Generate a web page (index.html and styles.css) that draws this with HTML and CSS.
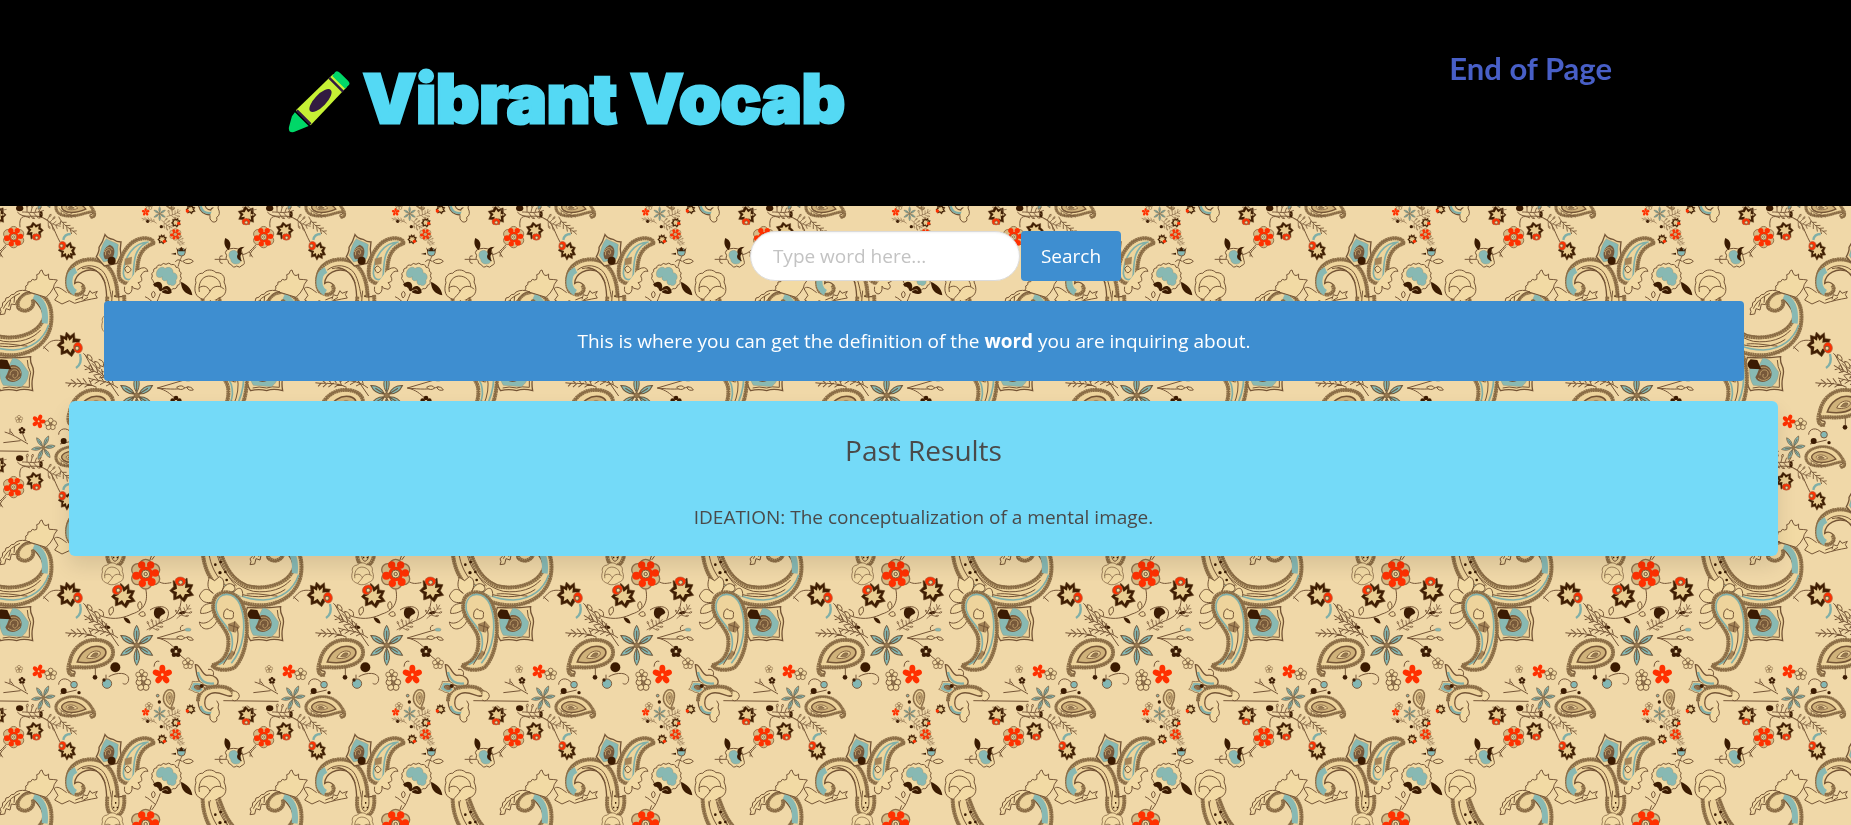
FILE: index.html
```html
<!DOCTYPE html>
<html lang="en">
<head>
<meta charset="utf-8">
<title>Vibrant Vocab</title>
<link rel="stylesheet" href="styles.css">
</head>
<body>
<svg class="wallpaper" aria-hidden="true">
  <defs>
    <g id="rose">
      <g class="halo"><circle cx="0" cy="-26" r="18"/><circle cx="24" cy="-13" r="18"/><circle cx="24" cy="14" r="18"/><circle cx="0" cy="27" r="18"/><circle cx="-24" cy="14" r="18"/><circle cx="-24" cy="-13" r="18"/></g>
      <g class="red"><circle cx="-12" cy="-27" r="11"/><circle cx="15" cy="-27" r="11"/><circle cx="29" cy="-3" r="11"/><circle cx="18" cy="24" r="12"/><circle cx="-10" cy="28" r="11"/><circle cx="-28" cy="5" r="12"/><circle r="22"/></g>
      <circle class="core" r="12"/><circle class="line" r="5"/>
    </g>
    <g id="bloom">
      <path class="husk" d="M-6 -38 L6 -26 L18 -36 L20 -18 L36 -16 L28 2 L38 16 L20 20 L10 36 L-4 24 L-22 30 L-22 12 L-34 2 L-22 -10 L-24 -28 L-10 -24Z"/>
      <path class="petal" d="M-2 -24 L3 -12 L14 -22 L12 -6 L26 -8 L16 4 L26 12 L12 12 L6 24 L-2 12 L-14 20 L-12 6 L-24 2 L-12 -4 L-14 -18 L-4 -12Z"/>
    </g>
    <g id="bud"><ellipse class="redline" rx="16" ry="13"/><circle class="core" cx="1" cy="3" r="6"/></g>
    <g id="daisy">
      <g id="petals3"><path class="blue" d="M0 -8 C-14 -30 -8 -48 0 -60 C8 -48 12 -30 0 -8Z M0 -12 V-44"/><path class="blue" transform="rotate(58)" d="M0 -8 C-12 -26 -8 -44 0 -56 C8 -44 12 -26 0 -8Z M0 -12 V-40"/><path class="blue" transform="rotate(-58)" d="M0 -8 C-12 -26 -8 -44 0 -56 C8 -44 12 -26 0 -8Z M0 -12 V-40"/></g>
      <use href="#petals3" transform="rotate(180)"/><circle class="husk2" r="8"/>
    </g>
    <g id="star" class="red"><ellipse cx="0" cy="-18" rx="9" ry="12"/><ellipse cx="0" cy="-18" rx="9" ry="12" transform="rotate(72)"/><ellipse cx="0" cy="-18" rx="9" ry="12" transform="rotate(144)"/><ellipse cx="0" cy="-18" rx="9" ry="12" transform="rotate(216)"/><ellipse cx="0" cy="-18" rx="9" ry="12" transform="rotate(288)"/><circle r="13"/><circle class="starcore" r="4"/></g>
    <g id="teardrop">
      <path class="band" d="M-68 55 C-60 68 -42 62 -48 50 C-64 50 -66 36 -62 20 C-55 -20 -20 -48 22 -44 C52 -42 72 -24 66 2 C58 32 10 40 -30 38 C-56 38 -70 44 -68 55Z"/>
      <path class="rope" d="M-48 60 C-66 66 -72 44 -62 20 C-55 -20 -20 -48 22 -44 C52 -42 72 -24 66 2 C58 32 10 40 -30 38 L-62 38"/>
      <path class="tanband" d="M-40 22 C-30 -10 0 -30 28 -24 C50 -18 50 -2 36 10 C16 26 -14 26 -40 22Z"/>
      <path class="core" d="M-12 10 C-4 -8 14 -16 28 -8 C34 4 10 16 -12 10Z"/>
      <path class="husk2" d="M0 6 C6 -4 14 -8 22 -4 C24 4 12 8 0 6Z"/>
    </g>
    <g id="posy"><g class="line cream"><circle cx="0" cy="-13" r="9"/><circle cx="13" cy="-3" r="9"/><circle cx="8" cy="12" r="9"/><circle cx="-8" cy="12" r="9"/><circle cx="-13" cy="-3" r="9"/></g><circle class="husk2" r="4"/></g>
    <g id="darkposy"><circle cx="0" cy="-10" r="7"/><circle cx="10" cy="-2" r="7"/><circle cx="6" cy="10" r="7"/><circle cx="-6" cy="10" r="7"/><circle cx="-10" cy="-2" r="7"/></g>
    <g id="sprig"><path class="line" d="M0 0 C25 -10 45 -8 75 -34 M18 -6 L12 -22 M32 -9 L30 -28 M46 -14 L46 -34 M58 -21 L62 -42 M24 -7 L38 4 M42 -12 L58 -3 M58 -21 L74 -16"/><path class="line cream" d="M12 -22 q-9 -7 -3 -14 q9 4 3 14 M30 -28 q-8 -7 -2 -14 q8 5 2 14 M38 4 q9 -4 15 3 q-8 6 -15 -3 M58 -3 q8 -5 14 1 q-7 6 -14 -1"/></g>
    <g id="fern"><path class="line" d="M0 0 C-30 -24 -60 -20 -90 -30 M-14 -10 l-4 -16 M-28 -18 l-8 -16 M-44 -22 l-10 -14 M-60 -24 l-12 -13 M-20 -14 l-16 8 M-36 -20 l-18 10 M-54 -23 l-16 10 M-72 -26 l-12 8"/></g>
    <g id="shell"><path class="line cream" d="M-20 46 C-44 40 -50 20 -42 -4 C-48 -20 -34 -34 -22 -32 C-12 -46 10 -44 18 -34 C34 -36 48 -22 42 -6 C52 14 50 36 26 42 C16 52 -8 56 -20 46Z M-32 24 C-36 0 -26 -22 -4 -24 C18 -24 32 -10 32 8 M-34 12 C-20 2 -6 6 0 22 C10 2 34 4 42 16 M0 22 C-4 30 -14 38 -20 46"/></g>
    <g id="calyx">
      <path class="line cream" d="M-40 10 Q-48 4 -42 -4 Q-48 -12 -38 -17 Q-40 -28 -29 -28 Q-28 -40 -16 -36 Q-10 -46 -1 -39 Q8 -47 15 -38 Q27 -41 29 -30 Q41 -30 39 -19 Q49 -14 42 -5 Q49 4 41 10 Q44 22 33 24 Q32 36 20 34 Q10 44 0 36 Q-30 40 -40 10Z"/>
      <path class="teal" d="M-30 -10 C-30 -28 -10 -36 -4 -26 C8 -36 22 -26 20 -14 C34 -14 36 4 28 8 C34 18 20 30 12 22 C6 26 0 16 2 8 C-8 16 -16 4 -12 -2 C-22 4 -30 0 -30 -10Z"/>
      <path class="dark" d="M-40 22 C-26 4 -6 16 -14 36 C-4 20 14 24 16 46 C6 54 -8 48 -14 44 C-10 36 0 36 6 42 C2 30 -8 36 -16 42 C-26 40 -20 28 -30 28 C-36 30 -36 24 -40 22Z M44 14 C60 20 76 32 78 54 C58 50 44 38 44 14Z"/>
      <path class="line" d="M-18 48 C-26 70 -32 84 -44 98 M-32 82 C-46 70 -54 62 -64 58 M-40 62 q-10 -14 2 -20 q10 10 -2 20"/>
    </g>
    <g id="medallion">
      <path class="band" d="M-10 -52 Q-2 -40 14 -38 Q24 -30 38 -30 Q34 -10 38 10 L26 34 L-12 42 L-36 14 Q-26 -4 -28 -14 Q-16 -30 -10 -52Z"/>
      <path class="teal" d="M-6 -40 C10 -30 24 -28 30 -22 C26 -8 32 4 24 20 L-14 30 L-28 10 C-20 -4 -22 -20 -6 -40Z"/>
      <path class="brownfill" d="M4 -22 C20 -16 22 0 12 20 L-10 22 C-20 4 -12 -14 4 -22Z"/>
      <path class="tanline" d="M-8 10 C-12 -4 0 -12 6 -4 C10 6 2 10 0 2 M-12 0 C-10 -14 8 -18 12 -6"/>
      <circle class="dark" cx="10" cy="26" r="12"/>
    </g>
    <g id="scroll">
      <path class="band" d="M203 712 C192 680 204 648 232 636 C270 620 316 634 334 660 C348 684 350 712 352 740 L372 740 C376 776 368 798 345 798 C325 796 318 780 320 740 C318 690 305 668 285 662 C262 655 226 668 224 700 C238 690 258 704 252 722 C246 738 214 736 203 712Z"/>
      <path class="rope" d="M246 706 C262 720 238 742 218 732 C198 724 194 680 215 652 C236 626 285 620 312 640 C342 662 352 700 353 744 M322 740 C318 780 328 798 345 798 C368 796 376 770 372 734"/>
      <path class="tealband" d="M226 728 C210 718 204 700 211 676 C214 668 220 664 228 660"/>
      <path class="line" d="M232 660 C258 640 292 644 312 668 C326 690 330 720 334 742 M246 656 C274 648 304 664 316 700 M262 652 C290 656 300 670 310 690 M338 722 C334 760 332 780 345 784 C360 780 358 750 354 726"/>
      <path class="dark" d="M343 736h4v5h-4z M345 756h4v5h-4z M339 770h4v5h-4z M350 770h4v5h-4z"/>
      <use href="#medallion" x="325" y="606"/>
      <path class="band" d="M460 580 C464 566 430 558 405 572 C370 592 352 640 357 680 C362 704 404 710 410 680 C414 640 410 600 460 580Z"/>
      <path class="rope" d="M460 580 C464 566 430 558 405 572 C370 592 352 640 357 680 C362 704 404 710 410 680 C414 640 410 600 460 580Z"/>
      <path class="tealline" d="M446 576 C400 578 372 620 370 670 C374 696 398 694 400 672 C402 630 404 594 440 578"/>
      <path class="line cream" d="M374 656 q8 -14 14 -4 q10 6 0 14 q-8 8 -14 -10"/>
      <path class="tan" d="M374 626 l22 -6 l-2 22 l-20 4z"/>
      <path class="line cream" d="M412 660 q26 -16 32 4 q-14 -4 -22 14 q10 18 -8 20 q14 14 0 20 q-18 -2 -18 -10 q2 22 -12 24 q-14 -4 -10 -22"/>
      <path class="line cream" d="M200 728 C184 716 172 706 162 716 L174 736 L164 750 L186 762 L208 752 L224 760 C250 752 268 748 292 744 L286 734 L292 724 L276 730 L270 722 L262 738 L250 734 L246 748 M226 750 l20 -8 M248 752 l16 -10"/>
    </g>
    <g id="motif">
      <path class="line cream" d="M74 722 Q80 714 77 708 Q86 706 84 696 Q94 698 97 688 Q104 692 110 688 Q112 680 110 674 Q119 674 121 662 L126 660 Q128 670 134 676 Q142 678 146 672 Q144 682 148 688 Q160 688 172 690 Q160 704 160 714 Q152 730 138 742Z"/>
      <path class="line cream" d="M0 794 Q6 784 0 776 Q10 772 8 758 Q18 756 18 744 Q28 744 34 734 Q44 736 48 726 Q66 716 90 726 C70 724 54 742 46 764 L34 762 L30 780 L18 776 L14 792Z M10 776 C20 756 34 742 60 730 M26 770 l6 -20 M42 758 l2 -20"/>
      <path class="band" d="M52 25 C50 -5 75 -28 100 -25 C145 -15 157 20 155 60 C150 130 90 168 30 168 C-50 165 -138 110 -142 0 C-142 -22 -120 -32 -98 -20 C-82 20 -70 78 -10 104 C50 122 110 100 126 60 C134 36 120 20 100 -4 C108 20 82 42 60 30Z"/>
      <path class="rope" d="M98 -2 C108 24 76 42 58 26 C42 6 66 -24 98 -24 C145 -15 157 20 154 62 C150 130 90 166 30 166 C-50 163 -138 110 -142 0 C-142 -22 -120 -32 -98 -16 C-82 20 -70 82 -10 108 C50 122 112 100 128 62"/>
      <path class="tealband" d="M102 -12 C130 2 138 34 134 70"/>
      <path class="tealline" d="M146 74 C130 122 90 146 40 150 C-10 150 -56 130 -76 104 M-132 -8 C-130 -24 -110 -24 -100 -8"/>
      <path class="line" d="M-124 4 C-118 60 -86 110 -30 132 C20 146 72 142 106 118 M-100 6 C-90 60 -50 108 10 124 C60 130 100 116 122 90 M-10 132 C20 128 60 138 82 138 M-122 20 C-124 -8 -104 -12 -96 12 C-80 50 -68 84 -40 108"/>
      <g class="dark"><circle cx="-88" cy="36" r="4"/><circle cx="-104" cy="44" r="4"/><circle cx="-90" cy="68" r="5"/><circle cx="-74" cy="66" r="4"/><circle cx="-70" cy="90" r="4"/><circle cx="-50" cy="108" r="4"/></g>
      <path class="band" d="M-8 172 Q40 176 92 170 Q90 186 96 196 Q104 210 98 232 Q94 250 98 272 Q70 264 50 272 Q26 266 2 272 C-14 250 -20 210 -8 172Z"/>
      <path class="line" d="M82 180 Q82 200 92 218 Q86 240 88 262 Q64 258 50 264 Q26 258 8 264"/>
      <path class="teal" d="M38 174 C64 176 70 196 86 216 C84 240 78 250 64 260 L10 256 C-4 236 -4 196 4 186 C20 210 24 206 38 174Z"/>
      <path class="brownfill" d="M32 196 C56 190 72 214 62 234 C48 250 22 250 16 232 C24 220 26 206 32 196Z"/>
      <path class="tanline" d="M30 226 C30 204 56 206 54 222 C50 240 34 236 40 222 M24 234 C36 246 52 242 60 230 M30 204 C46 196 62 208 62 220"/>
      <path class="dark" d="M2 178 L22 180 L34 208 L0 206 C-12 196 -8 186 2 178Z"/>

      <path class="line cream" d="M640 130 C620 120 622 100 628 82 L644 92 L658 80 C676 86 674 110 664 126 M640 130 C618 108 606 120 598 138 C606 158 620 160 640 156 M636 160 C610 160 600 176 602 190 C618 192 634 184 642 176 M648 184 C640 214 612 226 598 216 C602 244 636 244 650 214 M664 126 C676 100 690 96 700 106 C710 116 704 126 690 126 M700 128 C714 108 730 110 728 140"/>
      <path class="band" d="M640 160 C642 120 700 112 726 160 C752 220 742 310 706 350 C690 364 646 362 636 346 C672 338 690 304 684 262 C676 226 634 204 640 160Z"/>
      <path class="rope" d="M640 160 C642 120 700 112 726 160 C752 220 742 310 706 350 C690 364 646 362 636 346 C672 338 690 304 684 262 C676 226 634 204 640 160Z"/>
      <path class="tealline" d="M656 344 C690 330 704 290 694 254 C682 222 644 202 648 164 C654 126 700 120 720 164 C744 226 728 300 694 340"/>
      <path class="line cream" d="M672 186 q8 -16 16 -4 q16 0 12 12 q2 16 -14 12 q-20 4 -14 -20"/>
      <path class="tan" d="M684 222 l22 -8 l14 16 l-14 18 l-20 -6z M694 300 l12 8 l-12 20 l-12 2z"/>
      <path class="line" d="M686 224 l30 10 M704 214 l-4 32 M712 232 q8 40 -12 84 M690 310 l-20 34"/>

      <g class="line"><path d="M436 112 C446 150 436 180 396 192 C350 214 310 206 276 184 L250 160 M130 146 C148 122 160 118 184 122 M130 140 l16 14 M448 240 C490 200 540 220 544 145 M472 92 C490 104 498 100 514 98 M455 16 L446 40 M472 264 L560 238 M472 264 C510 268 540 270 566 260 M472 264 C500 270 510 282 522 292 M536 312 L560 332 M326 380 C350 366 384 366 386 386 C386 400 376 406 368 400 M286 350 l0 26 M318 374 v16 M256 166 l24 44 M276 190 l40 42 M320 236 l36 52 M500 208 C520 170 480 160 450 180"/></g>
      <use href="#rose" x="437" y="72"/>
      <use href="#bloom" x="205" y="134"/><use href="#bud" transform="translate(234 143) rotate(80)"/>
      <use href="#bloom" x="368" y="138"/><use href="#bud" transform="translate(352 119) rotate(-40)"/>
      <use href="#bloom" x="543" y="120"/><use href="#bud" x="541" y="94"/>
      <path class="tealline2" d="M240 162 C246 184 240 196 228 204"/>
      <path class="line cream" d="M262 164 q16 2 14 18 q-16 -4 -14 -18 M284 184 q18 2 16 22 q-16 -6 -16 -22 M296 178 q18 4 14 20 M330 196 q-10 -20 8 -26 q8 16 -8 26 M416 192 q18 -16 20 4 q-12 8 -20 -4 M420 180 q-14 -16 0 -26 q12 12 0 26 M268 196 q-4 14 10 20 M306 214 q12 2 10 14"/>
      <path class="dark" d="M312 230 q14 -8 20 4 q-12 8 -20 -4 M370 202 q18 0 22 18 q-16 2 -22 -18 M464 178 C470 166 494 172 496 188 C490 196 482 192 478 206 C464 208 458 192 464 178Z M534 190 q14 -12 26 -4 q-10 12 -26 4"/>
      <use href="#sprig" transform="translate(530 206) rotate(-22) scale(.7)"/>
      <use href="#sprig" transform="translate(440 240) rotate(-10) scale(.7)"/>
      <use href="#fern" x="354" y="264"/><use href="#fern" transform="translate(290 262) rotate(-10)"/><use href="#fern" transform="translate(330 250) rotate(16)"/>
      <use href="#daisy" x="410" y="286"/>
      <use href="#teardrop" x="272" y="314"/>
      <path class="line cream" d="M530 262 q16 -10 24 2 q-12 10 -24 -2 M560 262 q14 -4 20 8 q-14 4 -20 -8 M542 240 q-4 -12 8 -14"/>
      <ellipse class="teal" cx="564" cy="239" rx="9" ry="5"/>
      <use class="dark" href="#darkposy" x="528" y="304"/><use href="#posy" transform="translate(564 340) scale(.75)"/>
      <use href="#star" x="487" y="374"/><use href="#posy" x="430" y="400"/><use href="#posy" transform="translate(425 376) scale(.8)"/>
      <path class="line" d="M462 350 q2 -20 16 -16"/>
      <circle class="dark" cx="346" cy="352" r="15"/><circle class="dark" cx="285" cy="382" r="7"/><circle class="tealdot" cx="321" cy="401" r="14"/><circle class="dark" cx="312" cy="390" r="5"/>

      <use href="#daisy" transform="translate(130 443) rotate(24) scale(.64)"/>
      <use href="#star" transform="translate(116 364) rotate(20) scale(.7)"/>
      <use href="#posy" transform="translate(152 372) scale(.8)"/><use href="#posy" transform="translate(57 357) scale(.5)"/>
      <use class="dark" href="#darkposy" transform="translate(66 391) scale(.6)"/>
      <use href="#teardrop" transform="translate(222 470) scale(-.8 .72) rotate(16)"/>
      <path class="line" d="M14 396 C40 404 50 412 84 432 M30 400 v-14 M40 404 l-8 -10 M66 398 L78 424 M10 428 L62 422 M-80 452 L86 454 M176 404 C176 386 200 378 216 400 M180 432 L230 420 M52 486 C70 510 110 490 130 504 C160 516 160 540 180 576 M60 532 C56 500 70 494 90 504 M0 620 C0 604 10 600 18 590"/>
      <circle class="dark" cx="191" cy="423" r="9"/><circle class="dark" cx="237" cy="428" r="5"/><circle class="tealdot" cx="222" cy="404" r="10"/>
      <ellipse class="dark" cx="59" cy="475" rx="11" ry="9"/><ellipse class="dark" cx="123" cy="493" rx="5" ry="10"/>
      <use href="#fern" transform="translate(176 474) rotate(190) scale(.62)"/><use href="#fern" transform="translate(176 500) rotate(206) scale(.8)"/>
      <use href="#sprig" transform="translate(66 486) rotate(20) scale(.8)"/><use href="#sprig" transform="translate(130 504) rotate(50) scale(.7)"/>
      <use href="#sprig" transform="translate(20 478) rotate(190) scale(.6)"/>
      <use href="#rose" transform="translate(41 561) scale(.72)"/>
      <use href="#bloom" transform="translate(106 542) rotate(180) scale(.72)"/><use href="#bud" transform="translate(109 561) scale(.75)"/>
      <use href="#bloom" transform="translate(204 602) rotate(160) scale(.72)"/><use href="#bud" transform="translate(187 587) rotate(100) scale(.8)"/>
      <path class="tealline2" d="M190 570 C192 556 200 552 212 552"/>
      <use href="#bloom" transform="translate(743 496) rotate(180) scale(.75)"/><use href="#bud" transform="translate(738 515) scale(.75)"/>

      <use href="#scroll"/>
      <use href="#shell" x="630" y="702"/>
      <use href="#shell" transform="translate(337 68) scale(.7)"/>
      <use href="#calyx" x="499" y="682"/>
      <path class="line cream" d="M534 650 C540 630 540 630 546 618 M546 634 q-14 -10 -20 2 M548 634 q20 -14 32 0 q-16 14 -32 0"/>
      <circle class="tealdot" cx="544" cy="606" r="12"/><path class="dark" d="M528 592 L536 602 L544 590 L552 602 L560 592 L556 604 H532Z M512 612 l16 -4 v6z"/>
      <g>
        <path class="line cream" d="M680 600 Q672 608 680 616 Q674 626 684 632 Q684 642 694 644 Q700 656 710 648 Q720 656 726 646 Q736 644 732 632 L724 600 Q700 590 680 600Z"/>
        <path class="teal" d="M692 604 C704 596 716 606 714 616 C724 618 726 632 718 640 C706 646 692 640 692 628 C684 620 686 608 692 604Z"/>
        <path class="dark" d="M734 590 C716 590 708 600 714 612 C706 622 716 632 726 634 C718 620 722 612 728 612 C718 602 726 596 734 590Z M676 564 C692 570 696 586 686 600 C674 592 670 578 676 564Z"/>
        <path class="line" d="M726 614 C744 612 754 600 768 584 M680 628 L644 628 M660 628 q-4 -12 8 -10 M660 628 q-4 12 8 12 M748 606 l10 16"/>
      </g>

      <use href="#daisy" transform="translate(479 491) scale(.36)"/>
      <use href="#teardrop" transform="translate(507 446) rotate(-70) scale(.4)"/>
      <use href="#star" transform="translate(437 486) scale(.4)"/><use href="#rose" transform="translate(526 553) scale(.4)"/>
      <use href="#bloom" transform="translate(527 518) scale(.4)"/><use href="#bloom" transform="translate(486 568) scale(.4)"/><use href="#bloom" transform="translate(571 478) scale(.4)"/>
      <g class="red"><circle cx="536" cy="520" r="5"/><circle cx="493" cy="574" r="5"/><circle cx="562" cy="483" r="5"/></g>
      <circle class="dark" cx="478" cy="456" r="5"/><circle class="dark" cx="443" cy="514" r="5"/><circle class="dark" cx="484" cy="530" r="5"/><circle class="tealdot" cx="473" cy="437" r="4"/>
      <use href="#sprig" transform="translate(500 500) scale(.55)"/><use href="#sprig" transform="translate(484 510) rotate(60) scale(.5)"/><use href="#fern" transform="translate(470 520) scale(.5)"/><use href="#sprig" transform="translate(530 560) rotate(70) scale(.4)"/>
      <use href="#posy" transform="translate(447 468) scale(.5)"/>

      <path class="band" d="M586 344 C600 340 604 374 620 376 C644 372 660 390 652 404 C640 414 604 410 596 390 C588 372 588 360 586 344Z"/>
      <path class="tealline2" d="M594 366 C600 394 620 404 642 400"/>
      <path class="band" d="M594 454 C594 420 620 410 650 410 C680 408 700 420 700 434 C690 450 662 420 634 430 C606 440 610 480 632 480 C636 470 646 472 648 486 C636 500 596 500 594 454Z"/>
      <path class="rope" d="M594 454 C594 420 620 410 650 410 C680 408 700 420 700 434"/>
      <path class="tealline2" d="M602 468 C606 486 620 492 638 488"/>
      <use href="#medallion" transform="translate(592 413) rotate(-90) scale(.5)"/>
      <path class="line cream" d="M698 422 q20 2 20 18 q-8 18 -22 10 M650 452 q10 10 4 22 q10 20 -4 28 q4 16 -12 14 q-12 -8 -8 -20 M640 376 q4 -20 -16 -18"/>
    </g>
    <pattern id="paisley" x="0" y="50" width="250" height="250" patternUnits="userSpaceOnUse" viewBox="0 0 750 750">
      <use href="#motif" x="0" y="-750"/><use href="#motif" x="-750" y="0"/><use href="#motif" x="750" y="0"/><use href="#motif" x="750" y="-750"/><use href="#motif" x="750" y="750"/><use href="#motif" x="0" y="750"/><use href="#motif"/>
    </pattern>
  </defs>
  <rect width="100%" height="100%" fill="url(#paisley)"/>
</svg>

<header class="hero">
  <div class="brand">
    <svg class="crayon" viewBox="18 21 63 63" aria-hidden="true">
      <path fill="#c6f135" d="M26 61 L64 24 L78 37 L41 76Z"/>
      <path fill="#00d768" d="M63 26 L66 22 Q68 20 71 23 L79 31 Q82 34 79 36 L76 39Z M25 63 L39 77 L24 83 Q18 84 19 78 L22 67Z"/>
      <path stroke="#321b41" stroke-width="2.5" d="M60 28 L74 42 M27 61 L41 75"/>
      <ellipse cx="51" cy="51" rx="15" ry="6" fill="#321b41" transform="rotate(-46 51 51)"/>
    </svg>
    <h1 class="title">Vibrant Vocab</h1>
  </div>
  <a class="page-link" href="#end">End of Page</a>
</header>

<main class="content">
  <form class="search">
    <input class="search-input" type="text" placeholder="Type word here..." aria-label="Word">
    <button class="search-button" type="button">Search</button>
  </form>
  <p class="message">This is where you can get the definition of the <strong>word</strong> you are inquiring about.</p>
  <section class="results" id="end">
    <h2 class="results-title">Past Results</h2>
    <p class="result">IDEATION: The conceptualization of a mental image.</p>
  </section>
</main>
</body>
</html>
```
FILE: styles.css
```css
* { box-sizing: border-box; }
html, body { margin: 0; min-height: 100%; }
body {
  background: #f0d8a8;
  color: #4a4a4a;
  font: 19px/30px "Open Sans", "Noto Sans", sans-serif;
}
.wallpaper { position: fixed; inset: 0; z-index: -1; width: 100%; height: 100%; }

.hero {
  display: flex;
  justify-content: space-between;
  align-items: flex-start;
  min-height: 206px;
  padding: 48px 239px 48px 288px;
  background: #000;
}
.brand { display: flex; align-items: center; gap: 13px; padding-top: 3px; }
.crayon { width: 62px; height: 62px; margin-top: 6px; }
.title {
  margin: 0;
  color: #54d9f4;
  font: 900 67px/96px Inter, sans-serif;
  -webkit-text-stroke: 3px #54d9f4;
}
.page-link {
  color: #485fc7;
  font: 700 31px/40px Lato, sans-serif;
  text-decoration: none;
}

.content { padding: 25px 73px 25px 69px; }
.search { display: flex; justify-content: center; gap: 1px; margin: 0 0 20px 24px; }
.search-input {
  width: 270px;
  height: 50px;
  padding: 0 22px;
  border: 1px solid #dbdbdb;
  border-radius: 25px;
  background: #fff;
  color: #363636;
  font: inherit;
  box-shadow: inset 0 1px 2px rgba(10, 10, 10, .05);
}
.search-input::placeholder { color: #c3c3c3; opacity: 1; }
.search-button {
  height: 50px;
  padding: 0 20px;
  border: 0;
  border-radius: 4px;
  background: #3e8ed0;
  color: #fff;
  font: inherit;
}
.message {
  margin: 0 34px 20px 35px;
  padding: 25px 48px 25px 28px;
  border-radius: 4px;
  background: #3e8ed0;
  color: #fff;
  text-align: center;
}
.results {
  padding: 24px;
  border-radius: 6px;
  background: #74daf8;
  box-shadow: 0 10px 20px rgba(10, 10, 10, .1);
  text-align: center;
}
.results-title { margin: 0 0 27px; font-size: 28px; font-weight: 400; line-height: 50px; }
.result { margin: 0; }

.wallpaper .line { fill: none; stroke: #745435; stroke-width: 3; }
.wallpaper .cream { fill: #f2daa4; }
.wallpaper .halo { fill: #d8bb86; stroke: #8f6f48; stroke-width: 4; }
.wallpaper .red { fill: #ff3000; }
.wallpaper .starcore { fill: #f2d8a0; }
.wallpaper .core { fill: #f2d8a0; stroke: #7f5d3c; stroke-width: 3; }
.wallpaper .husk { fill: #3f1d02; stroke: #5c3b1a; stroke-width: 2; }
.wallpaper .petal { fill: #e8cc90; }
.wallpaper .redline { fill: #ff3000; stroke: #a86040; stroke-width: 2; }
.wallpaper .blue { fill: #83b8b4; stroke: #6d563a; stroke-width: 3; }
.wallpaper .husk2 { fill: #967850; stroke: #6f5230; stroke-width: 2; }
.wallpaper .band { fill: #eed49c; stroke: #745435; stroke-width: 4; }
.wallpaper .rope { fill: none; stroke: #8c6e46; stroke-width: 12; stroke-dasharray: 6 1; }
.wallpaper .tanline { fill: none; stroke: #bc9c68; stroke-width: 3; }
.wallpaper .tanband { fill: #d0b27a; stroke: #745435; stroke-width: 5; }
.wallpaper .tan { fill: #a48458; }
.wallpaper .brownfill { fill: #77583a; }
.wallpaper .teal { fill: #88b9b3; stroke: #8a8060; stroke-width: 1; }
.wallpaper .tealband { fill: none; stroke: #88b9b3; stroke-width: 18; }
.wallpaper .tealline { fill: none; stroke: #7fafa8; stroke-width: 5; }
.wallpaper .tealline2 { fill: none; stroke: #7fafa8; stroke-width: 7; }
.wallpaper .tealdot { fill: #83b8b4; stroke: #7f5d3c; stroke-width: 3; }
.wallpaper .dark { fill: #3b1b02; }
```
